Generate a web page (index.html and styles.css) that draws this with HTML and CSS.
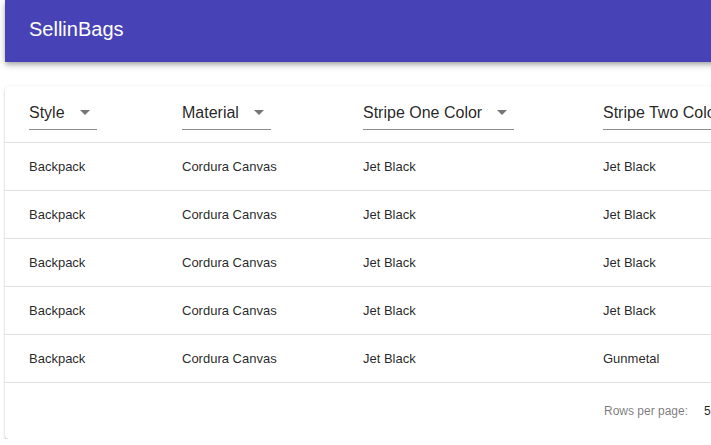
FILE: index.html
```html
<!DOCTYPE html>
<html>
<head>
<meta charset="utf-8">
<link rel="stylesheet" href="styles.css">
</head>
<body>
<div class="page">
  <header class="appbar"><h1 class="title">SellinBags</h1></header>
  <main class="content">
    <section class="card">
      <table class="table">
        <colgroup>
          <col class="c1"><col class="c2"><col class="c3"><col class="c4">
        </colgroup>
        <thead>
          <tr>
            <th><span class="select">Style<svg class="arrow" viewBox="0 0 24 24"><path d="M7 10l5 5 5-5z"/></svg></span></th>
            <th><span class="select">Material<svg class="arrow" viewBox="0 0 24 24"><path d="M7 10l5 5 5-5z"/></svg></span></th>
            <th><span class="select">Stripe One Color<svg class="arrow" viewBox="0 0 24 24"><path d="M7 10l5 5 5-5z"/></svg></span></th>
            <th><span class="select">Stripe Two Color<svg class="arrow" viewBox="0 0 24 24"><path d="M7 10l5 5 5-5z"/></svg></span></th>
          </tr>
        </thead>
        <tbody>
          <tr><td>Backpack</td><td>Cordura Canvas</td><td>Jet Black</td><td>Jet Black</td></tr>
          <tr><td>Backpack</td><td>Cordura Canvas</td><td>Jet Black</td><td>Jet Black</td></tr>
          <tr><td>Backpack</td><td>Cordura Canvas</td><td>Jet Black</td><td>Jet Black</td></tr>
          <tr><td>Backpack</td><td>Cordura Canvas</td><td>Jet Black</td><td>Jet Black</td></tr>
          <tr><td>Backpack</td><td>Cordura Canvas</td><td>Jet Black</td><td>Gunmetal</td></tr>
        </tbody>
      </table>
      <div class="footer">
        <span class="rpp">Rows per page:</span>
        <span class="rpp-val">5</span>
      </div>
    </section>
  </main>
</div>
</body>
</html>
```
FILE: styles.css
```css
html, body {
  margin: 0;
  padding: 0;
  background: #fff;
  overflow: hidden;
}
body {
  font-family: "Liberation Sans", Arial, sans-serif;
  color: rgba(0, 0, 0, 0.87);
}
.page {
  width: 1000px;
  padding-left: 5px;
}
.appbar {
  height: 62px;
  background: #4742b5;
  display: flex;
  align-items: center;
  padding-left: 24px;
  box-shadow: 0 2px 4px -1px rgba(0,0,0,0.2), 0 4px 5px 0 rgba(0,0,0,0.14), 0 1px 10px 0 rgba(0,0,0,0.12);
}
.title {
  margin: 0;
  font-size: 20px;
  font-weight: 400;
  color: #fff;
  line-height: 1;
  position: relative;
  top: -2px;
}
.content {
  padding-top: 24px;
}
.card {
  background: #fff;
  border-radius: 4px;
  box-shadow: 0 1px 3px 0 rgba(0,0,0,0.2), 0 1px 1px 0 rgba(0,0,0,0.14), 0 2px 1px -1px rgba(0,0,0,0.12);
}
.table {
  border-collapse: collapse;
  table-layout: fixed;
  width: 995px;
}
.c1 { width: 177px; }
.c2 { width: 181px; }
.c3 { width: 240px; }
.c4 { width: 397px; }
th, td {
  text-align: left;
  padding: 0;
  border-bottom: 1px solid #e0e0e0;
  white-space: nowrap;
}
th:first-child, td:first-child { padding-left: 24px; }
thead th {
  height: 56px;
  font-weight: 400;
  vertical-align: top;
  padding-top: 13px;
  box-sizing: border-box;
}
.select {
  display: inline-flex;
  align-items: center;
  position: relative;
  font-size: 16px;
  line-height: 19px;
  padding: 4px 32px 7px 0;
  border-bottom: 1px solid #8c8c8c;
  color: rgba(0, 0, 0, 0.87);
}
.arrow {
  position: absolute;
  right: 0;
  top: 1px;
  width: 24px;
  height: 24px;
  fill: #757575;
}
td {
  height: 47px;
  font-size: 13px;
  vertical-align: middle;
}
.footer {
  height: 56px;
  display: flex;
  align-items: center;
  padding-left: 599px;
  font-size: 12px;
  color: rgba(0, 0, 0, 0.54);
}
.rpp-val {
  margin-left: 16px;
  color: rgba(0, 0, 0, 0.87);
}
```
